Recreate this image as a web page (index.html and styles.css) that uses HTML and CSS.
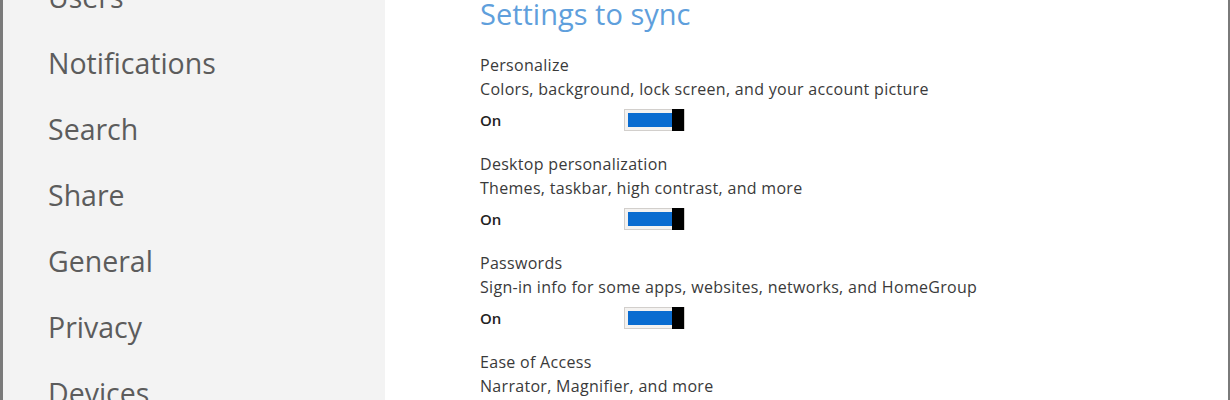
FILE: index.html
```html
<!DOCTYPE html>
<html lang="en">
<head>
  <meta charset="UTF-8">
  <title>PC settings - Sync your settings</title>
  <meta name="viewport" content="width=device-width, initial-scale=1.0">
  <link rel="stylesheet" href="styles.css">
</head>
<body>
  <div class="frame">
    <!-- left menu -->
    <nav class="side-menu">
      <ul>
        <li>Users</li>
        <li>Notifications</li>
        <li>Search</li>
        <li>Share</li>
        <li>General</li>
        <li>Privacy</li>
        <li>Devices</li>
      </ul>
    </nav>

    <main class="sync-panel">
      <h2>Settings to sync</h2>

      <div class="sync-item">
        <div class="sync-title">Personalize</div>
        <div class="sync-desc">Colors, background, lock screen, and your account picture</div>
        <div class="sync-row">
          <span class="state">On</span>
          <span class="toggle"><span class="toggle-fill"></span><span class="toggle-thumb"></span></span>
        </div>
      </div>

      <div class="sync-item">
        <div class="sync-title">Desktop personalization</div>
        <div class="sync-desc">Themes, taskbar, high contrast, and more</div>
        <div class="sync-row">
          <span class="state">On</span>
          <span class="toggle"><span class="toggle-fill"></span><span class="toggle-thumb"></span></span>
        </div>
      </div>

      <div class="sync-item">
        <div class="sync-title">Passwords</div>
        <div class="sync-desc">Sign-in info for some apps, websites, networks, and HomeGroup</div>
        <div class="sync-row">
          <span class="state">On</span>
          <span class="toggle"><span class="toggle-fill"></span><span class="toggle-thumb"></span></span>
        </div>
      </div>

      <div class="sync-item">
        <div class="sync-title">Ease of Access</div>
        <div class="sync-desc">Narrator, Magnifier, and more</div>
      </div>
    </main>
  </div>
</body>
</html>
```

FILE: styles.css
```css
html, body {
  margin: 0; padding: 0;
  height: 100%;
  overflow: hidden;
}
body {
  font-family: "Open Sans", "Noto Sans", Arial, sans-serif;
  color: #333;
  background: #fff;
}

.frame {
  display: flex;
  height: 400px;
  border-left: 3px solid #7a7a7a;
  border-right: 2px solid #7a7a7a;
  box-sizing: border-box;
  overflow: hidden;
}

/* left menu */
.side-menu {
  width: 382px;
  flex-shrink: 0;
  background: #f3f3f3;
}
.side-menu ul {
  list-style: none;
  margin: -36px 0 0 0;
  padding: 0 0 0 45px;
}
.side-menu li {
  font-size: 28.5px;
  line-height: 66px;
  color: #5c5c5c;
}

/* right panel */
.sync-panel {
  flex: 1;
  padding-left: 95px;
}
.sync-panel h2 {
  margin: -4px 0 21px 0;
  font-size: 29px;
  line-height: 36px;
  font-weight: 400;
  color: #5f9fdc;
}

.sync-item {
  margin-bottom: 21px;
}
.sync-title, .sync-desc {
  font-size: 16px;
  line-height: 24px;
  letter-spacing: 0.3px;
  color: #3a3a3a;
}
.sync-row {
  display: flex;
  align-items: center;
  margin-top: 8px;
  height: 22px;
}
.state {
  width: 144px;
  font-size: 15px;
  font-weight: 600;
  color: #222;
}

.toggle {
  display: flex;
  width: 61px;
  height: 22px;
  padding: 3px 0 3px 3px;
  box-sizing: border-box;
  border: 1px solid #d2cfcc;
  background: #f4f2f0;
}
.toggle-fill {
  flex: 1;
  background: #0a6cd0;
}
.toggle-thumb {
  width: 12px;
  margin: -4px 0;
  background: #000;
}
```
